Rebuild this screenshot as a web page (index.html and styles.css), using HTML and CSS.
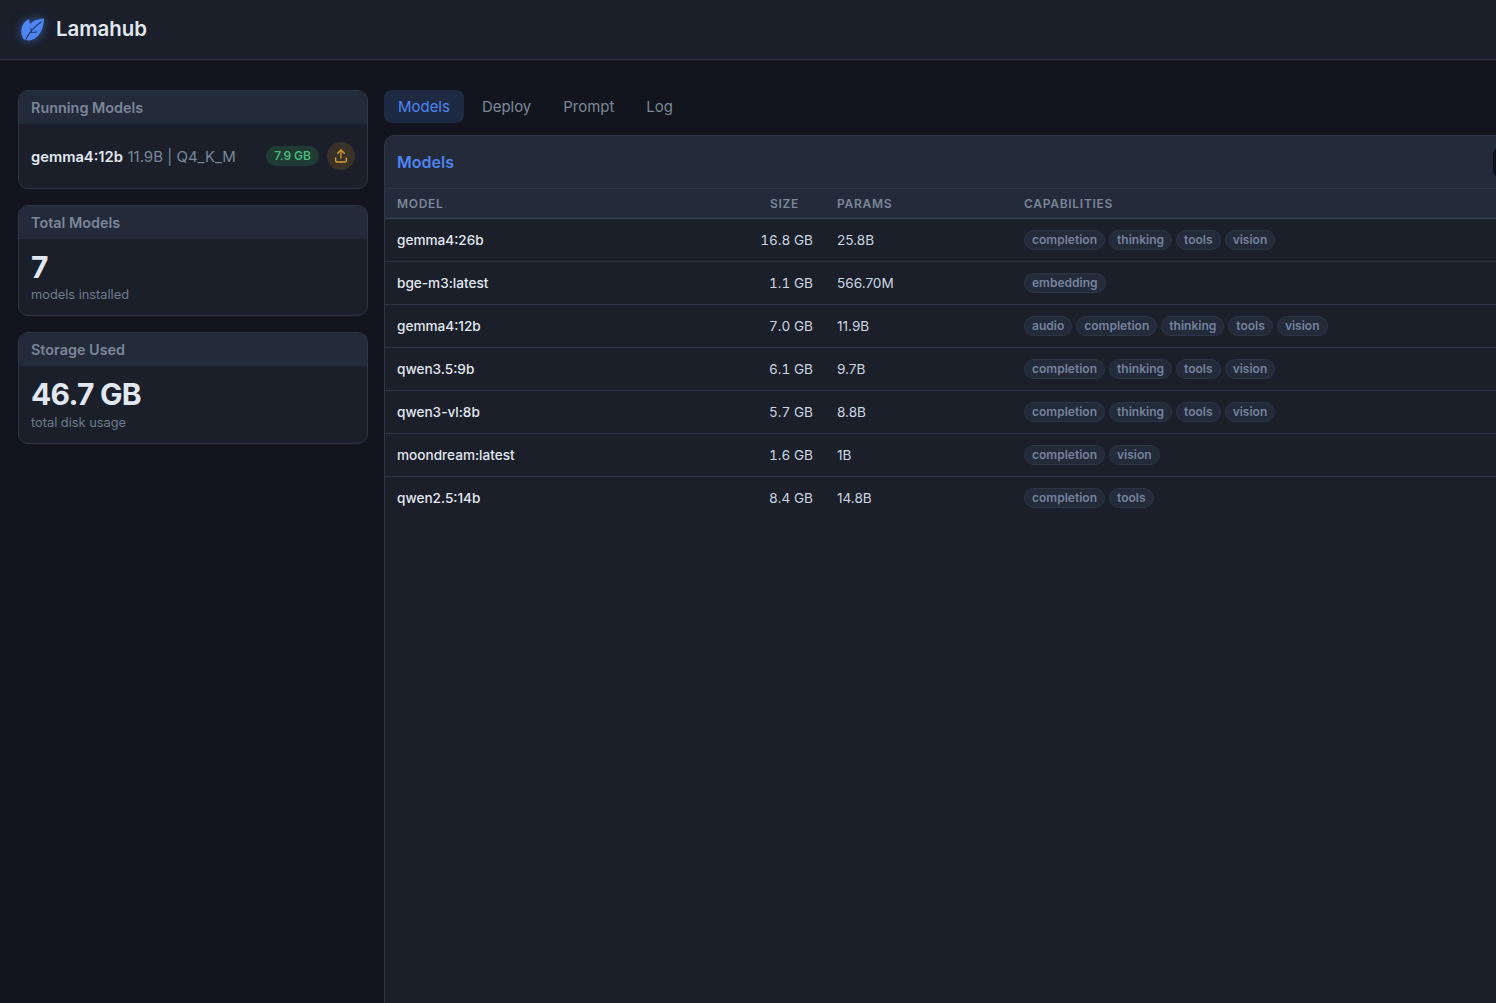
FILE: index.html
```html
<!DOCTYPE html>
<html lang="en">
<head>
    <meta charset="UTF-8">
    <meta name="viewport" content="width=device-width, initial-scale=1.0">
    <title>Lamahub</title>
    <link rel="stylesheet" href="styles.css">
</head>
<body>
    <header class="topbar">
        <svg class="logo" width="26" height="26" viewBox="0 0 26 26">
            <path class="logo-leaf" d="M25 2.500C24.500 11 22 20 14 23.500C10.500 25 6.500 24.500 4.500 23C2 19 1.500 13.500 3.500 9.500C5 6.500 7.500 4 10.500 3C10 5 10.500 7 11.500 8C13.500 5 18 3 25 2.500Z"/>
            <path class="logo-vein" d="M7 23C10 17 15 11 22 6M12.500 16.500L12 12.500M12.500 16.500L18 16"/>
        </svg>
        <span class="brand">Lamahub</span>
    </header>

    <div class="layout">
        <aside class="sidebar">
            <section class="card">
                <h2 class="card-title">Running Models</h2>
                <div class="running-row">
                    <div class="running-info">
                        <span class="running-name">gemma4:12b</span>
                        <span class="running-meta">11.9B | Q4_K_M</span>
                    </div>
                    <span class="mem-badge">7.9 GB</span>
                    <button class="unload-btn" type="button">
                        <svg width="16" height="16" viewBox="0 0 24 24" fill="none" stroke="currentColor" stroke-width="2" stroke-linecap="round" stroke-linejoin="round">
                            <path d="M4 15v4a2 2 0 0 0 2 2h12a2 2 0 0 0 2-2v-4"/>
                            <path d="M17 8l-5-5-5 5"/>
                            <path d="M12 3v12"/>
                        </svg>
                    </button>
                </div>
            </section>

            <section class="card">
                <h2 class="card-title">Total Models</h2>
                <div class="stat">
                    <div class="stat-value">7</div>
                    <div class="stat-label">models installed</div>
                </div>
            </section>

            <section class="card">
                <h2 class="card-title">Storage Used</h2>
                <div class="stat">
                    <div class="stat-value">46.7 GB</div>
                    <div class="stat-label">total disk usage</div>
                </div>
            </section>
        </aside>

        <main class="content">
            <nav class="tabs">
                <a class="tab active">Models</a>
                <a class="tab">Deploy</a>
                <a class="tab">Prompt</a>
                <a class="tab">Log</a>
            </nav>

            <section class="panel">
                <div class="panel-head">
                    <h1 class="panel-title">Models</h1>
                    <div class="panel-search"></div>
                </div>
                <table class="models">
                    <thead>
                        <tr>
                            <th class="col-model">Model</th>
                            <th class="col-size">Size</th>
                            <th class="col-params">Params</th>
                            <th class="col-caps">Capabilities</th>
                        </tr>
                    </thead>
                    <tbody>
                        <tr>
                            <td class="name">gemma4:26b</td>
                            <td class="size">16.8 GB</td>
                            <td>25.8B</td>
                            <td><div class="caps"><span class="cap">completion</span><span class="cap">thinking</span><span class="cap">tools</span><span class="cap">vision</span></div></td>
                        </tr>
                        <tr>
                            <td class="name">bge-m3:latest</td>
                            <td class="size">1.1 GB</td>
                            <td>566.70M</td>
                            <td><div class="caps"><span class="cap">embedding</span></div></td>
                        </tr>
                        <tr>
                            <td class="name">gemma4:12b</td>
                            <td class="size">7.0 GB</td>
                            <td>11.9B</td>
                            <td><div class="caps"><span class="cap">audio</span><span class="cap">completion</span><span class="cap">thinking</span><span class="cap">tools</span><span class="cap">vision</span></div></td>
                        </tr>
                        <tr>
                            <td class="name">qwen3.5:9b</td>
                            <td class="size">6.1 GB</td>
                            <td>9.7B</td>
                            <td><div class="caps"><span class="cap">completion</span><span class="cap">thinking</span><span class="cap">tools</span><span class="cap">vision</span></div></td>
                        </tr>
                        <tr>
                            <td class="name">qwen3-vl:8b</td>
                            <td class="size">5.7 GB</td>
                            <td>8.8B</td>
                            <td><div class="caps"><span class="cap">completion</span><span class="cap">thinking</span><span class="cap">tools</span><span class="cap">vision</span></div></td>
                        </tr>
                        <tr>
                            <td class="name">moondream:latest</td>
                            <td class="size">1.6 GB</td>
                            <td>1B</td>
                            <td><div class="caps"><span class="cap">completion</span><span class="cap">vision</span></div></td>
                        </tr>
                        <tr class="last">
                            <td class="name">qwen2.5:14b</td>
                            <td class="size">8.4 GB</td>
                            <td>14.8B</td>
                            <td><div class="caps"><span class="cap">completion</span><span class="cap">tools</span></div></td>
                        </tr>
                    </tbody>
                </table>
            </section>
        </main>
    </div>
</body>
</html>
```

FILE: styles.css
```css
* {
    box-sizing: border-box;
}

html, body {
    height: 100%;
}

body {
    margin: 0;
    font-family: Inter, "Noto Sans", sans-serif;
    background: #12151d;
    color: #e2e8f0;
    display: flex;
    flex-direction: column;
    overflow: hidden;
}

.topbar {
    height: 60px;
    flex: none;
    display: flex;
    align-items: center;
    gap: 11px;
    padding: 0 19px 2px;
    background: #1a1f2a;
    border-bottom: 1px solid #2d3546;
}

.logo {
    flex: none;
    filter: drop-shadow(0 0 5px rgba(79, 133, 240, 0.6));
}

.logo-leaf {
    fill: #4f85f0;
}

.logo-vein {
    fill: none;
    stroke: #1f3a73;
    stroke-width: 1.2;
    stroke-linecap: round;
}

.brand {
    font-size: 20.4px;
    font-weight: 600;
    color: #e2e8f0;
}

.layout {
    flex: 1;
    display: flex;
    min-height: 0;
}

.sidebar {
    width: 350px;
    flex: none;
    margin: 30px 16px 0 18px;
    display: flex;
    flex-direction: column;
    gap: 16px;
}

.card {
    background: #1a1f2a;
    border: 1px solid #2d3546;
    border-radius: 10px;
    overflow: hidden;
}

.card-title {
    margin: 0;
    height: 33px;
    padding: 0 12px;
    display: flex;
    align-items: center;
    font-size: 14.4px;
    font-weight: 600;
    color: #7b8698;
    background: #232a3a;
}

.running-row {
    height: 64px;
    padding: 0 12px;
    display: flex;
    align-items: center;
}

.running-info {
    line-height: 20px;
    padding-top: 1px;
}

.running-name {
    font-size: 14.72px;
    font-weight: 600;
    color: #e2e8f0;
}

.running-meta {
    font-size: 15px;
    color: #7b8698;
}

.mem-badge {
    margin-left: auto;
    height: 20px;
    padding: 0 8px 1px;
    display: flex;
    align-items: center;
    border-radius: 10px;
    font-size: 12px;
    font-weight: 600;
    color: #48b87c;
    background: #1f3b33;
}

.unload-btn {
    width: 28px;
    height: 28px;
    margin-left: 8px;
    padding: 0;
    display: flex;
    align-items: center;
    justify-content: center;
    border: 0;
    border-radius: 50%;
    color: #d69e2e;
    background: #3a3129;
}

.stat {
    padding: 10px 12px 12px;
}

.stat-value {
    font-size: 30px;
    line-height: 36px;
    font-weight: 700;
    letter-spacing: -0.75px;
    color: #e2e8f0;
}

.stat-label {
    margin-top: 2.4px;
    font-size: 12.8px;
    line-height: 16px;
    color: #6f7a8c;
}

.content {
    flex: 1;
    min-width: 0;
    padding-top: 30px;
    display: flex;
    flex-direction: column;
}

.tabs {
    display: flex;
    gap: 4px;
    margin-bottom: 12px;
}

.tab {
    height: 33px;
    padding: 0 14px;
    display: flex;
    align-items: center;
    border-radius: 8px;
    font-size: 14.96px;
    color: #7b8698;
}

.tab.active {
    color: #4f85f0;
    background: #1e2a44;
}

.panel {
    flex: 1;
    width: 1140px;
    background: #1a1f2a;
    border: 1px solid #2d3546;
    border-right: 0;
    border-bottom: 0;
    border-radius: 10px 0 0 0;
    overflow: hidden;
}

.panel-head {
    height: 53px;
    padding: 0 12px;
    display: flex;
    align-items: center;
    justify-content: space-between;
    background: #232a3a;
    border-bottom: 1px solid #2d3546;
}

.panel-title {
    margin: 0;
    font-size: 16px;
    font-weight: 600;
    color: #4f85f0;
}

.panel-search {
    width: 28px;
    height: 29px;
    margin-right: -9px;
    border-radius: 6px;
    background: #0d1017;
}

.models {
    width: 100%;
    border-collapse: collapse;
    table-layout: fixed;
}

.models th {
    height: 29px;
    padding: 0 12px;
    text-align: left;
    font-size: 12px;
    font-weight: 600;
    letter-spacing: 0.72px;
    text-transform: uppercase;
    color: #7b8698;
    background: #232a3a;
    border-bottom: 1px solid #39435a;
}

.models th.col-size {
    text-align: right;
    padding-right: 26px;
}

.col-model {
    width: 360px;
}

.col-size {
    width: 80px;
}

.col-params {
    width: 187px;
}

.models td {
    height: 43px;
    padding: 0 12px;
    font-size: 13.6px;
    color: #cbd5e1;
    border-bottom: 1px solid #2d3546;
}

.models tr.last td {
    border-bottom: 0;
}

.models td.name {
    font-weight: 500;
    color: #e2e8f0;
}

.models td.size {
    text-align: right;
    font-variant-numeric: tabular-nums;
}

.caps {
    display: flex;
    gap: 4px;
}

.cap {
    height: 20px;
    padding: 0 7px;
    display: flex;
    align-items: center;
    border: 1px solid #2d3546;
    border-radius: 10px;
    font-size: 12.04px;
    font-weight: 600;
    color: #74829c;
    background: #232a3a;
}
```
